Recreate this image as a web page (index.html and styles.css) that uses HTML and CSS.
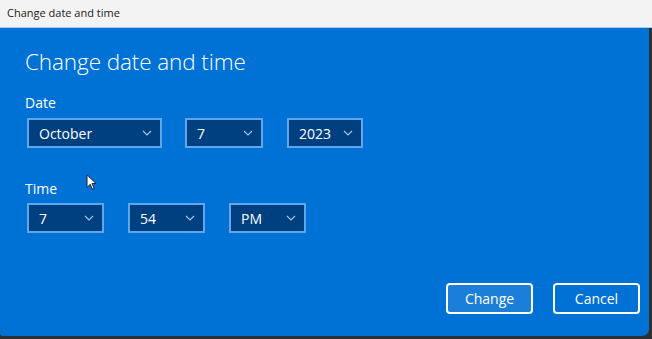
FILE: index.html
```html
<!DOCTYPE html>
<html>
<head>
<meta charset="utf-8">
<link rel="stylesheet" href="styles.css">
</head>
<body>
<div class="window">
  <div class="titlebar">Change date and time</div>
  <main class="dialog">
    <h1 class="heading">Change date and time</h1>
    <div class="label label-date">Date</div>
    <div class="row row-date">
      <div class="select w-month"><span>October</span><svg class="chev" viewBox="0 0 10 6"><path d="M1 1l4 4 4-4"/></svg></div>
      <div class="select w-day"><span>7</span><svg class="chev" viewBox="0 0 10 6"><path d="M1 1l4 4 4-4"/></svg></div>
      <div class="select w-year"><span>2023</span><svg class="chev" viewBox="0 0 10 6"><path d="M1 1l4 4 4-4"/></svg></div>
    </div>
    <div class="label label-time">Time</div>
    <div class="row row-time">
      <div class="select w-time"><span>7</span><svg class="chev" viewBox="0 0 10 6"><path d="M1 1l4 4 4-4"/></svg></div>
      <div class="select w-time"><span>54</span><svg class="chev" viewBox="0 0 10 6"><path d="M1 1l4 4 4-4"/></svg></div>
      <div class="select w-time"><span>PM</span><svg class="chev" viewBox="0 0 10 6"><path d="M1 1l4 4 4-4"/></svg></div>
    </div>
    <div class="actions">
      <button class="btn btn-primary">Change</button>
      <button class="btn">Cancel</button>
    </div>
    <svg class="cursor" viewBox="0 0 12 18"><path d="M1 1v14l3.5-3.5 2.5 5.5 2-1-2.5-5.3H11z" fill="#fff" stroke="#1a1a1a" stroke-width="1"/></svg>
  </main>
</div>
</body>
</html>
```

FILE: styles.css
```css
* { box-sizing: border-box; }
html, body { margin: 0; padding: 0; }
body {
  width: 652px;
  height: 339px;
  background: #2c2f33;
  font-family: "Open Sans", "Noto Sans", sans-serif;
  overflow: hidden;
}
.window {
  display: flex;
  flex-direction: column;
  height: 336px;
}
.titlebar {
  height: 28px;
  background: #f3f3f3;
  border-bottom: 1px solid #a9cdf0;
  color: #1b1b1b;
  font-size: 11px;
  line-height: 26px;
  padding-left: 7px;
}
.dialog {
  position: relative;
  flex: 1;
  margin-right: 3px;
  background: #0071d5;
  border-radius: 0 0 7px 3px;
  padding: 18px 0 0 25px;
  color: #fff;
}
.heading {
  margin: 0;
  font-weight: 300;
  font-size: 22.5px;
  line-height: 32px;
  letter-spacing: -0.1px;
}
.label {
  font-size: 14px;
  line-height: 20px;
}
.label-date { margin-top: 15px; }
.label-time { margin-top: 31px; }
.row {
  display: flex;
  gap: 23px;
  margin-left: 2px;
  margin-top: 5px;
}
.row-time { gap: 24px; margin-top: 4px; }
.select {
  height: 30px;
  border: 2px solid #5fa6ea;
  background: #003f80;
  display: flex;
  align-items: center;
  justify-content: space-between;
  padding: 0 8px 0 10px;
  font-size: 14px;
  color: #fff;
}
.w-month { width: 135px; }
.w-day { width: 78px; }
.w-year { width: 76px; margin-left: 1px; }
.w-time { width: 77px; }
.chev {
  width: 10px;
  height: 6px;
  fill: none;
  stroke: #a9c8ea;
  stroke-width: 1.1;
}
.actions {
  display: flex;
  justify-content: flex-end;
  gap: 20px;
  margin-top: 50px;
  padding-right: 9px;
}
.btn {
  width: 87px;
  height: 31px;
  border: 2px solid #fff;
  border-radius: 4px;
  background: #0071d5;
  color: #fff;
  font-family: inherit;
  font-size: 14px;
  padding: 0;
}
.btn-primary { background: #1b7fd9; }
.cursor {
  position: absolute;
  left: 86px;
  top: 146px;
  width: 11px;
  height: 16px;
}
```
